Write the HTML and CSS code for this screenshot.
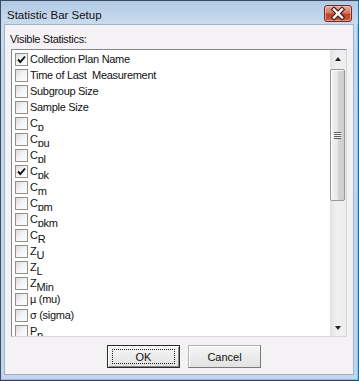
FILE: index.html
```html
<!DOCTYPE html>
<html lang="en">
<head>
    <meta charset="UTF-8">
    <title>Statistic Bar Setup</title>
    <link rel="stylesheet" href="styles.css">
</head>
<body>
    <div class="window">
        <div class="titlebar">
            <span class="title">Statistic Bar Setup</span>
            <button class="close-btn" aria-label="Close">
                <svg width="26" height="15" viewBox="0 0 26 15">
                    <path d="M9 3.5 L17 11.5 M17 3.5 L9 11.5" stroke="#4a1d18" stroke-width="4.6" stroke-linecap="square" fill="none"/>
                    <path d="M9 3.5 L17 11.5 M17 3.5 L9 11.5" stroke="#fff" stroke-width="2.4" stroke-linecap="square" fill="none"/>
                </svg>
            </button>
        </div>
        <div class="frame">
            <div class="client">
                <div class="caption">Visible Statistics:</div>

                <div class="listbox">
                    <ul class="items">
                        <li class="item"><span class="box"><svg width="11" height="11" viewBox="0 0 11 11"><path d="M2 5.5 L4.3 8 L9 2.5" stroke="#111" stroke-width="1.9" fill="none"/></svg></span>Collection Plan Name</li>
                        <li class="item"><span class="box"></span>Time of Last&nbsp; Measurement</li>
                        <li class="item"><span class="box"></span>Subgroup Size</li>
                        <li class="item"><span class="box"></span>Sample Size</li>
                        <li class="item"><span class="box"></span>C<span class="sub">p</span></li>
                        <li class="item"><span class="box"></span>C<span class="sub">pu</span></li>
                        <li class="item"><span class="box"></span>C<span class="sub">pl</span></li>
                        <li class="item"><span class="box"><svg width="11" height="11" viewBox="0 0 11 11"><path d="M2 5.5 L4.3 8 L9 2.5" stroke="#111" stroke-width="1.9" fill="none"/></svg></span>C<span class="sub">pk</span></li>
                        <li class="item"><span class="box"></span>C<span class="sub">m</span></li>
                        <li class="item"><span class="box"></span>C<span class="sub">pm</span></li>
                        <li class="item"><span class="box"></span>C<span class="sub">pkm</span></li>
                        <li class="item"><span class="box"></span>C<span class="sub">R</span></li>
                        <li class="item"><span class="box"></span>Z<span class="sub">U</span></li>
                        <li class="item"><span class="box"></span>Z<span class="sub">L</span></li>
                        <li class="item"><span class="box"></span>Z<span class="sub">Min</span></li>
                        <li class="item"><span class="box"></span>µ (mu)</li>
                        <li class="item"><span class="box"></span>σ (sigma)</li>
                        <li class="item"><span class="box"></span>P<span class="sub">p</span></li>
                    </ul>
                    <div class="scrollbar">
                        <div class="arrow"><span class="tri-up"></span></div>
                        <div class="track">
                            <div class="thumb"><span class="grip"></span></div>
                        </div>
                        <div class="arrow"><span class="tri-down"></span></div>
                    </div>
                </div>

                <div class="buttons">
                    <button class="btn default"><span class="focus">OK</span></button>
                    <button class="btn">Cancel</button>
                </div>
            </div>
        </div>
    </div>
</body>
</html>
```

FILE: styles.css
```css
body {
    margin: 0;
    font-family: 'Liberation Sans', Arial, sans-serif;
    background-color: #bfd5ec;
}
.window {
    width: 359px;
    height: 381px;
    box-sizing: border-box;
    border: 1px solid #3e4b5a;
    border-right-color: #2f6f9a;
    border-bottom-color: #2f3d4c;
    background: linear-gradient(to bottom, #b2cae4 0px, #cadcef 24px, #c3d8ee 60px, #c0d6ed 100%);
    display: flex;
    flex-direction: column;
}
.titlebar {
    height: 23px;
    display: flex;
    align-items: center;
    justify-content: space-between;
    padding: 0 6px 0 6px;
}
.title {
    font-size: 11.5px;
    color: #111;
    padding-top: 4px;
}
.close-btn {
    width: 28px;
    height: 17px;
    margin-top: 2px;
    padding: 0;
    border: 1px solid #6b2f28;
    border-radius: 3px;
    background: linear-gradient(to bottom, #e9a99d 0%, #d9785f 45%, #c0412b 55%, #c9593d 100%);
    box-shadow: inset 0 0 0 1px rgba(255, 210, 200, 0.55);
    display: flex;
    align-items: center;
    justify-content: center;
}
.frame {
    flex: 1;
    display: flex;
    padding: 0 4px 5px 3px;
    box-shadow: inset -1px -1px 0 #7cc6ee;
}
.client {
    flex: 1;
    background-color: #f5f2f6;
    border: 1px solid #9fb4cb;
    display: flex;
    flex-direction: column;
    padding: 7px 0 0 0;
}
.caption {
    font-size: 11px;
    letter-spacing: -0.3px;
    line-height: 14px;
    color: #111;
    padding-left: 5px;
    margin-bottom: 3px;
}
.listbox {
    width: 336px;
    height: 288px;
    box-sizing: border-box;
    margin-left: 6px;
    border: 1px solid #828790;
    border-right-color: #d6d6d6;
    border-bottom-color: #d6d6d6;
    background-color: #fff;
    display: flex;
    overflow: hidden;
}
.items {
    flex: 1;
    list-style: none;
    margin: 0;
    padding: 1px 0 0 0;
    overflow: hidden;
}
.item {
    height: 16px;
    line-height: 16px;
    overflow: hidden;
    white-space: nowrap;
    font-size: 11px;
    letter-spacing: -0.3px;
    color: #111;
    padding-left: 3px;
}
.box {
    display: inline-flex;
    align-items: center;
    justify-content: center;
    vertical-align: top;
    width: 11px;
    height: 11px;
    margin: 2px 2px 0 0;
    border: 1px solid #8f8f8f;
    background: linear-gradient(135deg, #dedede 0%, #f3f3f3 50%, #ffffff 100%);
}
.sub {
    font-size: 11px;
    vertical-align: -4px;
    letter-spacing: -0.2px;
}
.scrollbar {
    width: 16px;
    flex: none;
    display: flex;
    flex-direction: column;
    background: linear-gradient(to right, #e2e2e2, #f0f0f0 40%, #eeeeee);
}
.arrow {
    height: 17px;
    display: flex;
    align-items: center;
    justify-content: center;
}
.tri-up {
    width: 0;
    height: 0;
    border-left: 3.5px solid transparent;
    border-right: 3.5px solid transparent;
    border-bottom: 4px solid #222;
}
.tri-down {
    width: 0;
    height: 0;
    border-left: 3.5px solid transparent;
    border-right: 3.5px solid transparent;
    border-top: 4px solid #222;
}
.track {
    flex: 1;
    padding-top: 2px;
}
.thumb {
    width: 15px;
    height: 132px;
    box-sizing: border-box;
    border: 1px solid #979797;
    border-radius: 2px;
    background: linear-gradient(to right, #f4f4f4 0%, #e8e8e8 50%, #d4d4d4 55%, #cfcfcf 100%);
    box-shadow: inset 1px 1px 0 #fff;
    display: flex;
    align-items: center;
    justify-content: center;
}
.grip {
    width: 7px;
    height: 7px;
    background: repeating-linear-gradient(to bottom, #5e5e5e 0px, #5e5e5e 1px, #f4f4f4 1px, #f4f4f4 2px);
}
.buttons {
    display: flex;
    justify-content: center;
    gap: 8px;
    padding-left: 10px;
    margin-top: 8px;
}
.btn {
    width: 73px;
    height: 23px;
    padding: 0;
    font-family: 'Liberation Sans', Arial, sans-serif;
    font-size: 11px;
    color: #111;
    background: linear-gradient(to bottom, #f6f6f6 0%, #ececec 50%, #e2e2e2 100%);
    border: 1px solid #b0b0b0;
    border-right-color: #7a7a7a;
    border-bottom-color: #7a7a7a;
    box-shadow: inset 1px 1px 0 #fff;
}
.btn.default {
    border: 1px solid #2a2a2a;
    box-shadow: inset 1px 1px 0 #fff, inset -1px -1px 0 #8a8a8a;
    display: flex;
    align-items: center;
    justify-content: center;
}
.focus {
    width: 63px;
    height: 15px;
    line-height: 15px;
    border: 1px dotted #222;
    box-sizing: border-box;
}
```
